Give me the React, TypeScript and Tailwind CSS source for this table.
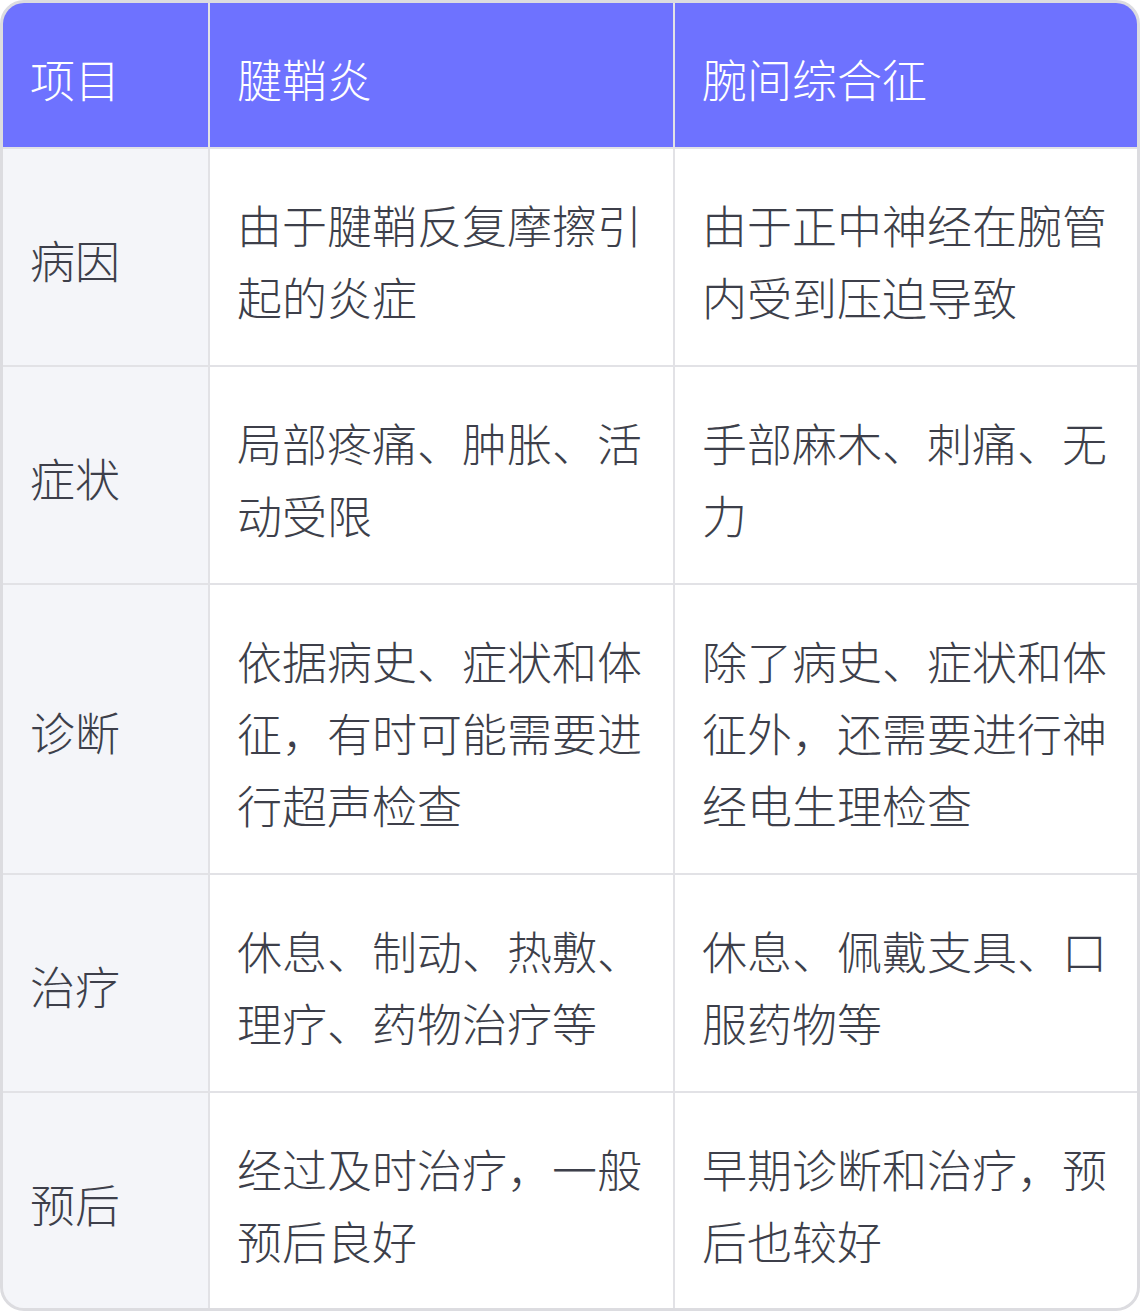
const header = ["项目", "腱鞘炎", "腕间综合征"];

const rows = [
  {
    item: "病因",
    a: "由于腱鞘反复摩擦引起的炎症",
    b: "由于正中神经在腕管内受到压迫导致",
  },
  {
    item: "症状",
    a: "局部疼痛、肿胀、活动受限",
    b: "手部麻木、刺痛、无力",
  },
  {
    item: "诊断",
    a: "依据病史、症状和体征，有时可能需要进行超声检查",
    b: "除了病史、症状和体征外，还需要进行神经电生理检查",
  },
  {
    item: "治疗",
    a: "休息、制动、热敷、理疗、药物治疗等",
    b: "休息、佩戴支具、口服药物等",
  },
  {
    item: "预后",
    a: "经过及时治疗，一般预后良好",
    b: "早期诊断和治疗，预后也较好",
  },
];

export default function App() {
  return (
    <div
      className="w-[1140px] h-[1312px] bg-white"
      style={{ fontFamily: '"Noto Sans CJK SC", "Noto Sans", sans-serif' }}
    >
      <div className="h-[1311px] rounded-[24px] border-[3px] border-[#dcdce0] overflow-hidden bg-[#e2e2e6]">
        <div className="grid grid-cols-[205px_463px_1fr] gap-[2px] text-[45px] leading-[72px] font-light">
          {/* Header */}
          {header.map((h) => (
            <div key={h} className="bg-[#6e72ff] text-white px-[27px] pt-[40px] pb-[32px]">
              {h}
            </div>
          ))}

          {rows.map((r) => (
            <div key={r.item} className="contents">
              <div className="bg-[#f4f5f9] text-[#3d3f4a] px-[27px] pt-[6px] flex items-center">
                {r.item}
              </div>
              <div className="bg-white text-[#3d3f4a] px-[27px] pt-[40px] pb-[32px] flex items-center">
                {r.a}
              </div>
              <div className="bg-white text-[#3d3f4a] px-[27px] pt-[40px] pb-[32px] flex items-center">
                {r.b}
              </div>
            </div>
          ))}
        </div>
      </div>
    </div>
  );
}
